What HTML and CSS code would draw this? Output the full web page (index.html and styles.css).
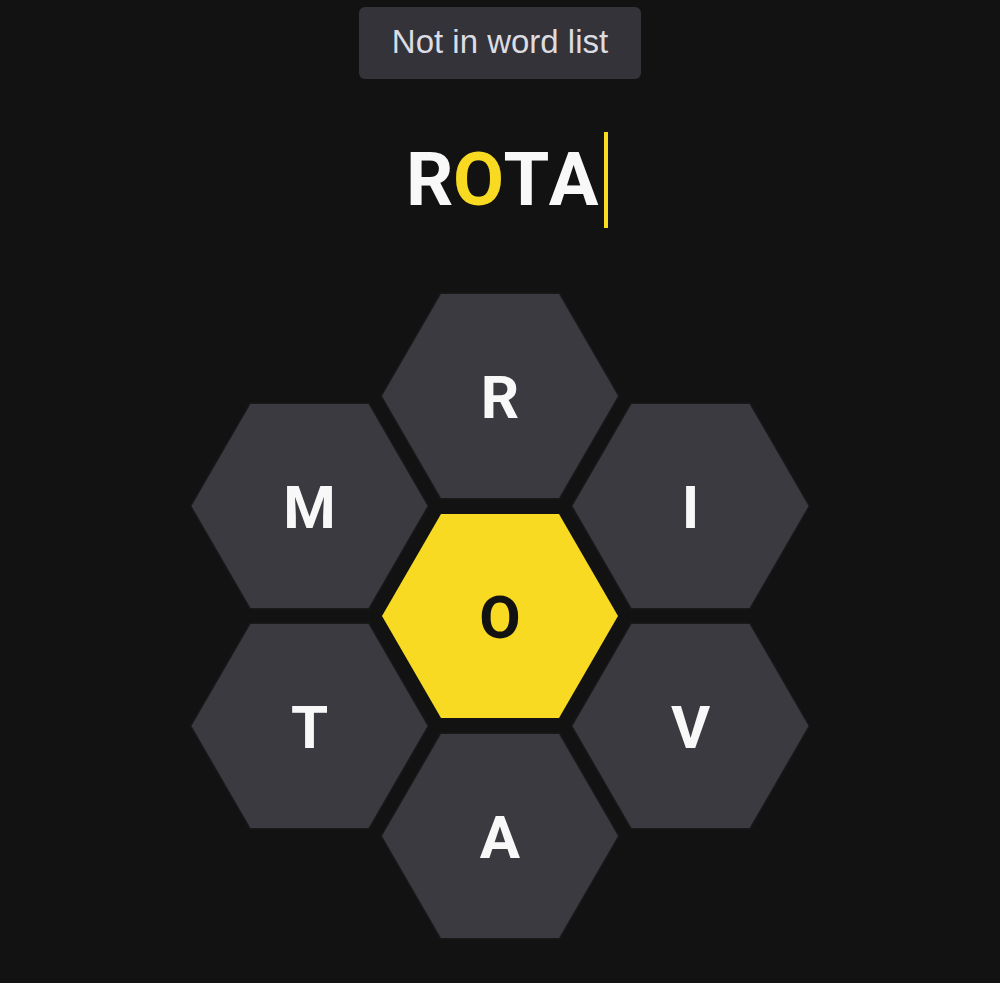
FILE: index.html
```html
<!DOCTYPE html>
<html lang="en">
<head>
<meta charset="utf-8">
<title>Spelling Bee</title>
<link rel="stylesheet" href="styles.css">
</head>
<body>
<div class="app">
  <div class="toast">Not in word list</div>
  <div class="word"><span class="l">R</span><span class="l center">O</span><span class="l">T</span><span class="l">A</span><span class="cursor"></span></div>
  <svg class="hive" width="620" height="652" viewBox="0 0 620 652" xmlns="http://www.w3.org/2000/svg">
    <g class="cell outer" transform="translate(310,106)">
      <polygon points="-118,0 -59,-102 59,-102 118,0 59,102 -59,102"/>
      <text x="0" y="21.5">R</text>
    </g>
    <g class="cell outer" transform="translate(119.5,216)">
      <polygon points="-118,0 -59,-102 59,-102 118,0 59,102 -59,102"/>
      <text x="0" y="21.5">M</text>
    </g>
    <g class="cell outer" transform="translate(500.5,216)">
      <polygon points="-118,0 -59,-102 59,-102 118,0 59,102 -59,102"/>
      <text x="0" y="21.5">I</text>
    </g>
    <g class="cell middle" transform="translate(310,326)">
      <polygon points="-118,0 -59,-102 59,-102 118,0 59,102 -59,102"/>
      <text x="0" y="21.5">O</text>
    </g>
    <g class="cell outer" transform="translate(119.5,436)">
      <polygon points="-118,0 -59,-102 59,-102 118,0 59,102 -59,102"/>
      <text x="0" y="21.5">T</text>
    </g>
    <g class="cell outer" transform="translate(500.5,436)">
      <polygon points="-118,0 -59,-102 59,-102 118,0 59,102 -59,102"/>
      <text x="0" y="21.5">V</text>
    </g>
    <g class="cell outer" transform="translate(310,546)">
      <polygon points="-118,0 -59,-102 59,-102 118,0 59,102 -59,102"/>
      <text x="0" y="21.5">A</text>
    </g>
  </svg>
</div>
</body>
</html>
```
FILE: styles.css
```css
html, body {
  margin: 0;
  padding: 0;
  background: #121213;
  height: 100%;
}
.app {
  display: flex;
  flex-direction: column;
  align-items: center;
}
.toast {
  margin-top: 7px;
  box-sizing: border-box;
  width: 282px;
  height: 72px;
  padding-bottom: 2px;
  line-height: 70px;
  text-align: center;
  background: #333339;
  border-radius: 6px;
  color: #dcdce2;
  font-family: "Liberation Sans", Arial, sans-serif;
  font-size: 33px;
}
.word {
  margin-top: 53px;
  height: 96px;
  line-height: 96px;
  font-family: Roboto, "Liberation Sans", sans-serif;
  font-weight: 700;
  font-size: 74px;
  letter-spacing: -0.5px;
  color: #f8f8f8;
  display: flex;
  align-items: flex-start;
  padding-left: 14px;
}
.word .center {
  color: #f7da21;
}
.cursor {
  display: block;
  width: 4px;
  height: 96px;
  margin-left: 6px;
  background: #f7da21;
}
.hive {
  display: block;
  margin-top: 62px;
  overflow: visible;
}
.cell polygon {
  stroke: #19191b;
  stroke-width: 3;
  paint-order: stroke;
}
.cell.outer polygon {
  fill: #3a3a40;
}
.cell.middle polygon {
  fill: #f7da21;
  stroke: none;
}
.cell text {
  font-family: Roboto, "Liberation Sans", sans-serif;
  font-weight: 700;
  font-size: 60px;
  text-anchor: middle;
  fill: #f8f8f8;
}
.cell.middle text {
  fill: #121213;
}
```
